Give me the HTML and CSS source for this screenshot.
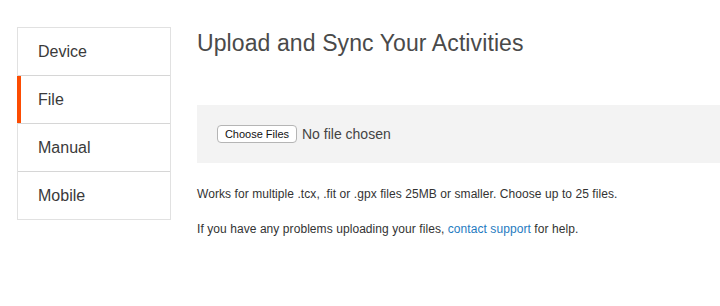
FILE: index.html
```html
<!DOCTYPE html>
<html lang="en">

<head>
    <meta charset="UTF-8">
    <meta name="viewport" content="width=device-width, initial-scale=1.0">
    <title>Upload and Sync Your Activities</title>
    <link rel="stylesheet" href="styles.css">
</head>

<body>
    <div class="page">
        <ul class="side-nav">
            <li class="nav-item">Device</li>
            <li class="nav-item active">File</li>
            <li class="nav-item">Manual</li>
            <li class="nav-item">Mobile</li>
        </ul>

        <div class="main">
            <h1>Upload and Sync Your Activities</h1>

            <div class="upload-box">
                <button class="choose-btn">Choose Files</button>
                <span class="file-status">No file chosen</span>
            </div>

            <p class="note">Works for multiple .tcx, .fit or .gpx files 25MB or smaller. Choose up to 25 files.</p>
            <p class="note">If you have any problems uploading your files, <a href="#">contact support</a> for help.</p>
        </div>
    </div>
</body>

</html>
```

FILE: styles.css
```css
body {
    margin: 0;
    font-family: "Liberation Sans", Arial, sans-serif;
    color: #333;
    background-color: #fff;
    overflow: hidden;
}

.page {
    display: flex;
    align-items: flex-start;
    gap: 26px;
    padding: 27px 0 0 17px;
}

.side-nav {
    list-style: none;
    margin: 0;
    padding: 0;
    width: 152px;
    border: 1px solid #e1e1e1;
    flex-shrink: 0;
}

.nav-item {
    position: relative;
    height: 47px;
    line-height: 47px;
    padding-left: 20px;
    font-size: 16px;
    color: #3a3a3a;
    border-bottom: 1px solid #d6d6d6;
}

.nav-item:last-child {
    border-bottom: none;
}

/* orange marker sits over the left border */
.nav-item.active::before {
    content: "";
    position: absolute;
    left: -1px;
    top: 0;
    bottom: 0;
    width: 4px;
    background-color: #fc4c02;
}

.main {
    flex: 1;
}

h1 {
    margin: 1px 0 47px;
    font-size: 23px;
    line-height: 30px;
    font-weight: 300;
    letter-spacing: 0.1px;
    color: #4a4a4a;
}

.upload-box {
    display: flex;
    align-items: center;
    gap: 5px;
    height: 58px;
    padding-left: 20px;
    background-color: #f3f3f3;
}

.choose-btn {
    height: 18px;
    width: 80px;
    padding: 0;
    font-family: "Liberation Sans", Arial, sans-serif;
    font-size: 11px;
    color: #111;
    background-color: #fff;
    border: 1px solid #b5b5b5;
    border-radius: 4px;
}

.file-status {
    font-size: 14px;
    color: #444;
}

.note {
    margin: 0;
    font-size: 12px;
    line-height: 18px;
    letter-spacing: 0.07px;
    color: #333;
}

.upload-box + .note {
    margin-top: 22px;
}

.note + .note {
    margin-top: 17px;
}

.note a {
    color: #1f7bbf;
    text-decoration: none;
}
```
